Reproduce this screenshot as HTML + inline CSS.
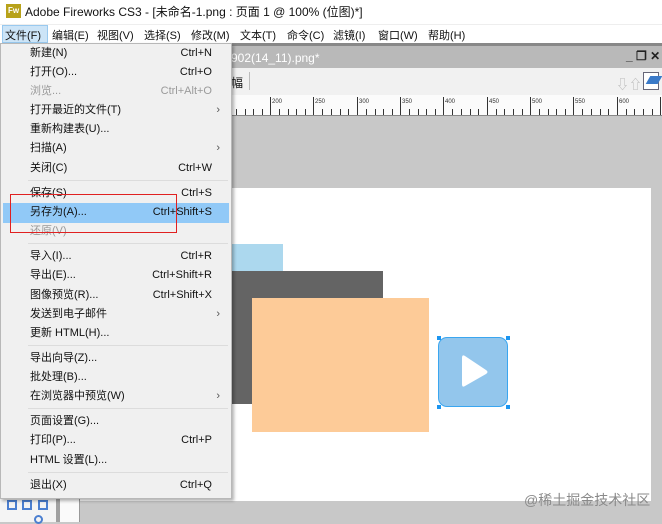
<!DOCTYPE html>
<html><head><meta charset="utf-8"><style>
*{margin:0;padding:0;box-sizing:border-box}
body{width:662px;height:522px;overflow:hidden;position:relative;background:#c8c8c8;font-family:"Liberation Sans","Noto Sans CJK SC",sans-serif;font-size:11px;color:#111}
.abs{position:absolute}
.mb{position:absolute;top:27px;font-size:11px}
.mi{position:absolute;left:30px;height:19px;line-height:19px;width:182px}
.mi .k{position:absolute;right:0;top:0}
.dis{color:#9a9a9a}
.sep{position:absolute;left:28px;width:200px;height:1px;background:#dcdcdc}
.arr{position:absolute;right:-8px;top:0;color:#555}
</style></head><body>
<div class="abs" style="left:0;top:0;width:662px;height:24px;background:#fff"></div>
<div class="abs" style="left:6px;top:4px;width:15px;height:14px;background:#b8a21a;color:#fff;font-size:8px;line-height:14px;text-align:center;font-weight:bold">Fw</div>
<div class="abs" style="left:25px;top:3px;font-size:12px">Adobe Fireworks CS3 - [未命名-1.png : 页面 1 @ 100% (位图)*]</div>
<div class="abs" style="left:0;top:24px;width:662px;height:19px;background:#fff;border-top:1px solid #eee"></div>
<div class="abs" style="left:2px;top:25px;width:46px;height:18px;background:#cce4f7;border:1px solid #99c9ef"></div>
<div class="mb" style="left:5px">文件(F)</div>
<div class="mb" style="left:52px">编辑(E)</div>
<div class="mb" style="left:97px">视图(V)</div>
<div class="mb" style="left:144px">选择(S)</div>
<div class="mb" style="left:191px">修改(M)</div>
<div class="mb" style="left:240px">文本(T)</div>
<div class="mb" style="left:287px">命令(C)</div>
<div class="mb" style="left:333px">滤镜(I)</div>
<div class="mb" style="left:378px">窗口(W)</div>
<div class="mb" style="left:428px">帮助(H)</div>
<div class="abs" style="left:0;top:43px;width:662px;height:3px;background:#888"></div>
<div class="abs" style="left:0;top:46px;width:662px;height:22px;background:#b9b9b9"></div>
<div class="abs" style="left:231px;top:51px;color:#fff;font-size:12px">902(14_11).png*</div>
<div class="abs" style="left:626px;top:49px;font-size:12px;font-weight:bold;color:#222">_ &#x2750; ✕</div>
<div class="abs" style="left:0;top:68px;width:662px;height:27px;background:#f1f1f1"></div>
<div class="abs" style="left:231px;top:74px;font-size:12px">幅</div>
<div class="abs" style="left:249px;top:72px;width:1px;height:18px;background:#bbb"></div>
<div class="abs" style="left:616px;top:74px;color:#bbb;font-size:13px">⇩⇧</div>
<div class="abs" style="left:643px;top:72px;width:16px;height:18px;border:1px solid #667;background:#fff"></div>
<div class="abs" style="left:648px;top:76px;width:12px;height:8px;background:#3a7ac8;transform:skewX(-30deg)"></div>
<div class="abs" style="left:0;top:95px;width:662px;height:21px;background:#fbfbfb;border-bottom:1px solid #888"></div>
<svg class="abs" style="left:0;top:95px" width="662" height="21">
<g stroke="#333" stroke-width="1">
<path d="M227.5 2V20M270.5 2V20M313.5 2V20M357.5 2V20M400.5 2V20M443.5 2V20M487.5 2V20M530.5 2V20M573.5 2V20M617.5 2V20M660.5 2V20"/>
<path d="M236.5 14V20M245.5 14V20M253.5 14V20M262.5 14V20M279.5 14V20M288.5 14V20M296.5 14V20M305.5 14V20M322.5 14V20M331.5 14V20M340.5 14V20M348.5 14V20M366.5 14V20M375.5 14V20M383.5 14V20M392.5 14V20M409.5 14V20M418.5 14V20M426.5 14V20M435.5 14V20M452.5 14V20M461.5 14V20M470.5 14V20M478.5 14V20M496.5 14V20M504.5 14V20M513.5 14V20M522.5 14V20M539.5 14V20M548.5 14V20M556.5 14V20M565.5 14V20M582.5 14V20M591.5 14V20M600.5 14V20M608.5 14V20M626.5 14V20M634.5 14V20M643.5 14V20M652.5 14V20"/>
</g>
<g font-size="6" fill="#333" font-family="Liberation Sans"><text x="272" y="8">200</text><text x="315" y="8">250</text><text x="359" y="8">300</text><text x="402" y="8">350</text><text x="445" y="8">400</text><text x="489" y="8">450</text><text x="532" y="8">500</text><text x="575" y="8">550</text><text x="619" y="8">600</text></g>
</svg>
<div class="abs" style="left:0;top:495px;width:56px;height:27px;background:#f4f4f4"></div>
<div class="abs" style="left:56px;top:495px;width:4px;height:27px;background:#a0a0a0"></div>
<div class="abs" style="left:60px;top:495px;width:20px;height:27px;background:#fafafa;border-right:1px solid #999"></div>
<div class="abs" style="left:7px;top:500px;width:10px;height:10px;border:2px solid #4b7fd0"></div>
<div class="abs" style="left:22px;top:500px;width:10px;height:10px;border:2px solid #4b7fd0"></div>
<div class="abs" style="left:38px;top:500px;width:10px;height:10px;border:2px solid #4b7fd0"></div>
<div class="abs" style="left:34px;top:515px;width:9px;height:9px;border:2px solid #4b7fd0;border-radius:50%"></div>
<div class="abs" style="left:80px;top:188px;width:571px;height:313px;background:#fff"></div>
<div class="abs" style="left:230px;top:244px;width:53px;height:28px;background:#acd8ee"></div>
<div class="abs" style="left:230px;top:271px;width:153px;height:133px;background:#646464"></div>
<div class="abs" style="left:252px;top:298px;width:177px;height:134px;background:#fdcb98"></div>
<div class="abs" style="left:438px;top:337px;width:70px;height:70px;background:#93c6ec;border-radius:9px;border:1px solid #3aa6f0"></div>
<svg class="abs" style="left:437px;top:336px" width="73" height="73"><path d="M28 20 Q25 18 25 22 V48 Q25 52 28 50 L49 38 Q52 36 49 34 Z" fill="#fff"/>
<g fill="#1b95f0"><rect x="0" y="0" width="4" height="4"/><rect x="69" y="0" width="4" height="4"/><rect x="0" y="69" width="4" height="4"/><rect x="69" y="69" width="4" height="4"/></g></svg>
<div class="abs" style="left:524px;top:490px;color:#8a8a8a;font-size:14px">@稀土掘金技术社区</div>
<div class="abs" style="left:0;top:43px;width:232px;height:456px;background:#f0f0f0;border:1px solid #b8b8b8;box-shadow:2px 2px 3px rgba(0,0,0,.3)"></div>
<div class="abs" style="left:3px;top:203px;width:226px;height:20px;background:#91c9f7"></div>
<div class="mi" style="top:44px">新建(N)<span class="k">Ctrl+N</span></div>
<div class="mi" style="top:63px">打开(O)...<span class="k">Ctrl+O</span></div>
<div class="mi dis" style="top:82px">浏览...<span class="k">Ctrl+Alt+O</span></div>
<div class="mi" style="top:101px">打开最近的文件(T)<span class="arr">›</span></div>
<div class="mi" style="top:120px">重新构建表(U)...</div>
<div class="mi" style="top:139px">扫描(A)<span class="arr">›</span></div>
<div class="mi" style="top:159px">关闭(C)<span class="k">Ctrl+W</span></div>
<div class="sep" style="top:180px"></div>
<div class="mi" style="top:184px">保存(S)<span class="k">Ctrl+S</span></div>
<div class="mi" style="top:203px">另存为(A)...<span class="k">Ctrl+Shift+S</span></div>
<div class="mi dis" style="top:222px">还原(V)</div>
<div class="sep" style="top:243px"></div>
<div class="mi" style="top:247px">导入(I)...<span class="k">Ctrl+R</span></div>
<div class="mi" style="top:266px">导出(E)...<span class="k">Ctrl+Shift+R</span></div>
<div class="mi" style="top:286px">图像预览(R)...<span class="k">Ctrl+Shift+X</span></div>
<div class="mi" style="top:305px">发送到电子邮件<span class="arr">›</span></div>
<div class="mi" style="top:324px">更新 HTML(H)...</div>
<div class="sep" style="top:345px"></div>
<div class="mi" style="top:349px">导出向导(Z)...</div>
<div class="mi" style="top:368px">批处理(B)...</div>
<div class="mi" style="top:387px">在浏览器中预览(W)<span class="arr">›</span></div>
<div class="sep" style="top:408px"></div>
<div class="mi" style="top:412px">页面设置(G)...</div>
<div class="mi" style="top:431px">打印(P)...<span class="k">Ctrl+P</span></div>
<div class="mi" style="top:451px">HTML 设置(L)...</div>
<div class="sep" style="top:472px"></div>
<div class="mi" style="top:476px">退出(X)<span class="k">Ctrl+Q</span></div>
<div class="abs" style="left:10px;top:194px;width:167px;height:39px;border:1.5px solid #e02020"></div>
</body></html>
